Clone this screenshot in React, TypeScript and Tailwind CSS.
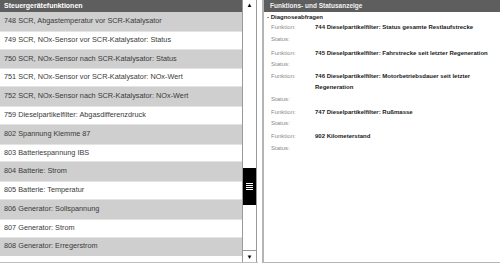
import React from 'react'

const rows = [
  '748 SCR, Abgastemperatur vor SCR-Katalysator',
  '749 SCR, NOx-Sensor vor SCR-Katalysator: Status',
  '750 SCR, NOx-Sensor nach SCR-Katalysator: Status',
  '751 SCR, NOx-Sensor vor SCR-Katalysator: NOx-Wert',
  '752 SCR, NOx-Sensor nach SCR-Katalysator: NOx-Wert',
  '759 Dieselpartikelfilter: Abgasdifferenzdruck',
  '802 Spannung Klemme 87',
  '803 Batteriespannung IBS',
  '804 Batterie: Strom',
  '805 Batterie: Temperatur',
  '806 Generator: Sollspannung',
  '807 Generator: Strom',
  '808 Generator: Erregerstrom',
]

const funcs = [
  { value: '744 Dieselpartikelfilter: Status gesamte Restlaufstrecke', gap: 'mb-[2.5px]' },
  { value: '745 Dieselpartikelfilter: Fahrstrecke seit letzter Regeneration', gap: 'mb-0' },
  { value: '746 Dieselpartikelfilter: Motorbetriebsdauer seit letzter Regeneration', gap: 'mb-[1.5px]' },
  { value: '747 Dieselpartikelfilter: Rußmasse', gap: 'mb-[1.5px]' },
  { value: '902 Kilometerstand', gap: 'mb-0' },
]

export default function App() {
  return (
    <div
      className="flex h-[265px] w-[500px] bg-white overflow-hidden"
      style={{ fontFamily: '"Liberation Sans", Arial, sans-serif' }}
    >
      {/* left list */}
      <div className="flex h-[263px] w-[258px] border-b border-[#bdbdbd]">
        <div className="flex w-[243px] flex-col border-r border-[#9a9a9a]">
          <div className="flex h-[12px] items-center bg-[#5e5e5e] pl-1 text-[7px] font-bold text-white">
            Steuergerätefunktionen
          </div>
          {rows.map((r, i) => (
            <div
              key={i}
              className={`flex h-[18.8px] items-center pl-[4px] text-[7.3px] text-[#3a3a3a] ${
                i % 2 === 0 ? 'bg-[#cfcfcf]' : 'bg-white border-y border-[#e4e4e4]'
              }`}
            >
              {r}
            </div>
          ))}
        </div>
        {/* scrollbar */}
        <div className="flex w-[14px] flex-col border-r border-[#9a9a9a] bg-white">
          <div className="flex h-[10px] items-center justify-center text-[6px] leading-none text-black">▲</div>
          <div className="h-[158px]" />
          <div className="flex h-[37px] flex-col items-center justify-center gap-[1px] bg-black">
            <div className="h-[1px] w-[7px] bg-white" />
            <div className="h-[1px] w-[7px] bg-white" />
            <div className="h-[1px] w-[7px] bg-white" />
            <div className="h-[1px] w-[7px] bg-white" />
          </div>
          <div className="flex-1" />
          <div className="flex h-[12px] items-center justify-center border-t border-[#9a9a9a] text-[6px] leading-none text-black">▼</div>
        </div>
      </div>

      {/* right panel */}
      <div className="ml-[4px] flex h-[263px] flex-1 flex-col border-b border-l-2 border-[#b5b5b5]">
        <div className="flex h-[12px] items-center bg-[#5e5e5e] pl-[6px] text-[6.5px] font-bold text-[#f0f0f0]">
          Funktions- und Statusanzeige
        </div>
        <div className="pl-[3px] text-[6px] leading-[11.5px]">
          <div className="leading-[10px] font-bold text-[#222]">- Diagnoseabfragen</div>
          {funcs.map((f, i) => (
            <div key={i} className={`pl-[4px] ${f.gap}`}>
              <div className="flex">
                <div className="w-[44px] shrink-0 text-[#8a8a8a]">Funktion:</div>
                <div className="pr-[4px] font-bold text-[#1a1a1a]">{f.value}</div>
              </div>
              <div className="text-[#8a8a8a]">Status:</div>
            </div>
          ))}
        </div>
      </div>
    </div>
  )
}
